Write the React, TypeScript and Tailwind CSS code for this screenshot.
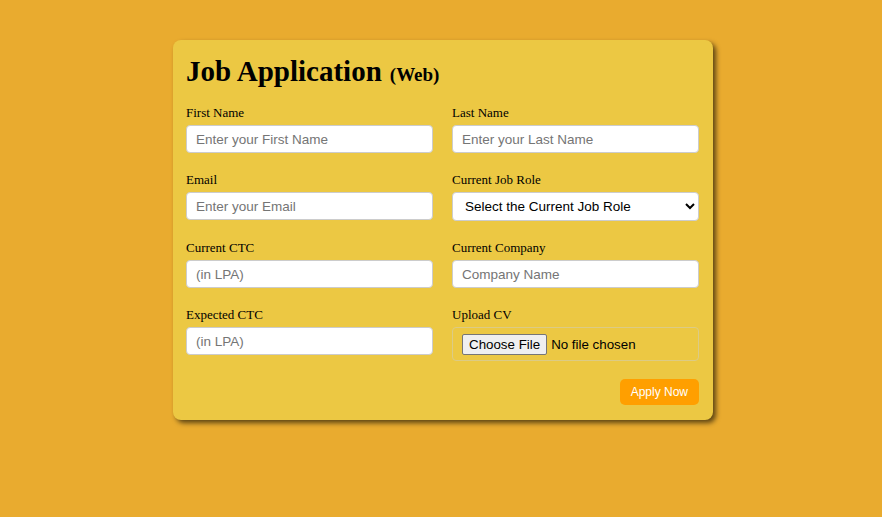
import React from "react";

const serif = { fontFamily: '"Liberation Serif", "Times New Roman", serif' };
const sans = { fontFamily: '"Liberation Sans", Arial, sans-serif' };

function Field({ label, children }: { label: string; children: React.ReactNode }) {
  return (
    <div className="flex flex-col">
      <label className="text-[13px] leading-[15px] text-black" style={serif}>
        {label}
      </label>
      <div className="mt-[5px]">{children}</div>
    </div>
  );
}

function TextInput({ placeholder }: { placeholder: string }) {
  return (
    <input
      type="text"
      placeholder={placeholder}
      className="w-full h-[28px] bg-white border border-[#cccccc] rounded-[4px] px-[9px] text-[13.5px] text-black placeholder:text-[#757575] outline-none"
      style={sans}
    />
  );
}

export default function App() {
  return (
    <div className="w-full min-h-[517px] bg-[#e9ab2f] pt-[40px]">
      <div
        className="ml-[173px] w-[540px] bg-[#ecc843] rounded-[8px] pl-[13px] pr-[14px] pt-[14px] pb-[15px] shadow-[3px_3px_5px_rgba(0,0,0,0.6)]"
      >
        <h1 className="text-black font-bold leading-[34px]" style={serif}>
          <span className="text-[29px]">Job Application</span>
          <span className="text-[19px] ml-[8px]">(Web)</span>
        </h1>
        <div className="grid grid-cols-2 gap-x-[19px] gap-y-[19px] mt-[12px]">
          <Field label="First Name">
            <TextInput placeholder="Enter your First Name" />
          </Field>
          <Field label="Last Name">
            <TextInput placeholder="Enter your Last Name" />
          </Field>
          <Field label="Email">
            <TextInput placeholder="Enter your Email" />
          </Field>
          <Field label="Current Job Role">
            <select
              className="w-full h-[29px] bg-white border border-[#cccccc] rounded-[4px] px-[8px] text-[13.5px] text-black outline-none"
              style={sans}
              defaultValue=""
            >
              <option value="">Select the Current Job Role</option>
            </select>
          </Field>
          <Field label="Current CTC">
            <TextInput placeholder="(in LPA)" />
          </Field>
          <Field label="Current Company">
            <TextInput placeholder="Company Name" />
          </Field>
          <Field label="Expected CTC">
            <TextInput placeholder="(in LPA)" />
          </Field>
          <Field label="Upload CV">
            <div className="w-full h-[34px] border border-[#dccb85] rounded-[4px] flex items-center px-[9px]">
              <input
                type="file"
                className="text-[13.33px] text-black file:h-[21px] file:px-[6px] file:mr-[4px] file:bg-[#efefef] file:border file:border-solid file:border-[#767676] file:rounded-[2px] file:text-black file:text-[13.33px]"
                style={sans}
              />
            </div>
          </Field>
        </div>
        <div className="flex justify-end mt-[18px]">
          <button
            className="h-[26px] px-[11px] bg-[#ff9f00] text-white text-[12px] rounded-[5px]"
            style={sans}
          >
            Apply Now
          </button>
        </div>
      </div>
    </div>
  );
}
